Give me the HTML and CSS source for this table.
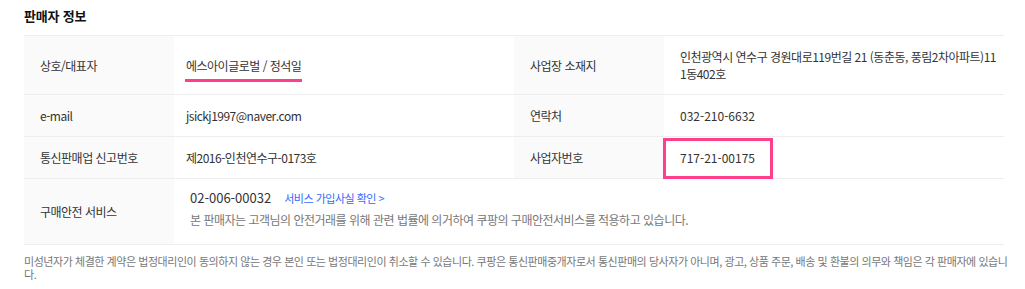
FILE: index.html
```html
<!DOCTYPE html>
<html lang="ko">
<head>
<meta charset="utf-8">
<title>판매자 정보</title>
<link rel="stylesheet" href="styles.css">
</head>
<body>
<section class="seller">
  <h2 class="seller-title">판매자 정보</h2>
  <table class="seller-table">
    <colgroup>
      <col class="col-label"><col class="col-value"><col class="col-label"><col class="col-value">
    </colgroup>
    <tbody>
      <tr>
        <th>상호/대표자</th>
        <td><span class="mark-underline">에스아이글로벌 / 정석일</span></td>
        <th>사업장 소재지</th>
        <td class="address">인천광역시 연수구 경원대로119번길 21 (동춘동, 풍림2차아파트)111동402호</td>
      </tr>
      <tr>
        <th>e-mail</th>
        <td>jsickj1997@naver.com</td>
        <th>연락처</th>
        <td class="num">032-210-6632</td>
      </tr>
      <tr>
        <th>통신판매업 신고번호</th>
        <td>제2016-인천연수구-0173호</td>
        <th>사업자번호</th>
        <td class="num mark-box-cell"><span class="mark-box"></span>717-21-00175</td>
      </tr>
      <tr class="safe-row">
        <th>구매안전 서비스</th>
        <td colspan="3">
          <p class="safe-line"><span class="safe-num">02-006-00032</span><a class="safe-link" href="#">서비스 가입사실 확인 &gt;</a></p>
          <p class="safe-desc">본 판매자는 고객님의 안전거래를 위해 관련 법률에 의거하여 쿠팡의 구매안전서비스를 적용하고 있습니다.</p>
        </td>
      </tr>
    </tbody>
  </table>
  <p class="seller-notice">미성년자가 체결한 계약은 법정대리인이 동의하지 않는 경우 본인 또는 법정대리인이 취소할 수 있습니다. 쿠팡은 통신판매중개자로서 통신판매의 당사자가 아니며, 광고, 상품 주문, 배송 및 환불의 의무와 책임은 각 판매자에 있습니다.</p>
</section>
</body>
</html>
```
FILE: styles.css
```css
* { box-sizing: border-box; }
body {
  margin: 0;
  background: #fff;
  font-family: "Noto Sans CJK KR", "Noto Sans", sans-serif;
  color: #333;
}
.seller {
  padding: 6px 12px 0 24px;
}
.seller-title {
  margin: 0 0 10px;
  font-size: 13px;
  line-height: 19px;
  font-weight: 700;
  color: #111;
  letter-spacing: -0.2px;
}
.seller-table {
  width: 980px;
  border-collapse: collapse;
  border-top: 1px solid #eee;
  border-bottom: 1px solid #eee;
  font-size: 12px;
  line-height: 17px;
  letter-spacing: -0.5px;
}
.col-label { width: 150px; }
.col-value { width: 340px; }
.seller-table th,
.seller-table td {
  border-top: 1px solid #eee;
  padding: 12px 16px;
  text-align: left;
  vertical-align: middle;
}
.seller-table th {
  background: #fafafa;
  font-weight: 400;
  color: #333;
}
.seller-table td {
  padding-left: 12px;
  color: #333;
}
.seller-table .address {
  padding-left: 16px;
  padding-right: 6px;
  word-break: break-all;
}
.seller-table .num {
  letter-spacing: 0;
  padding-left: 16px;
}
.mark-underline {
  position: relative;
  display: inline-block;
}
.mark-underline::after {
  content: "";
  position: absolute;
  left: -1px;
  right: -1px;
  top: 22px;
  height: 3px;
  background: #fd3f8c;
}
.mark-box-cell {
  position: relative;
}
.mark-box {
  position: absolute;
  left: -1px;
  top: 1px;
  width: 110px;
  height: 41px;
  border: 3px solid #fd3f8c;
}
.seller-table .safe-row td {
  padding: 10px 16px 15px;
}
.safe-line {
  margin: 0 0 4px;
  line-height: 18px;
}
.safe-num {
  font-size: 13px;
  letter-spacing: 0;
}
.safe-link {
  margin-left: 13px;
  color: #346aff;
  text-decoration: none;
  font-size: 11px;
}
.safe-desc {
  margin: 0;
  line-height: 18px;
  color: #777;
}
.seller-notice {
  margin: 10px 0 0;
  font-size: 11px;
  line-height: 13px;
  color: #777;
  letter-spacing: -0.45px;
}
```
